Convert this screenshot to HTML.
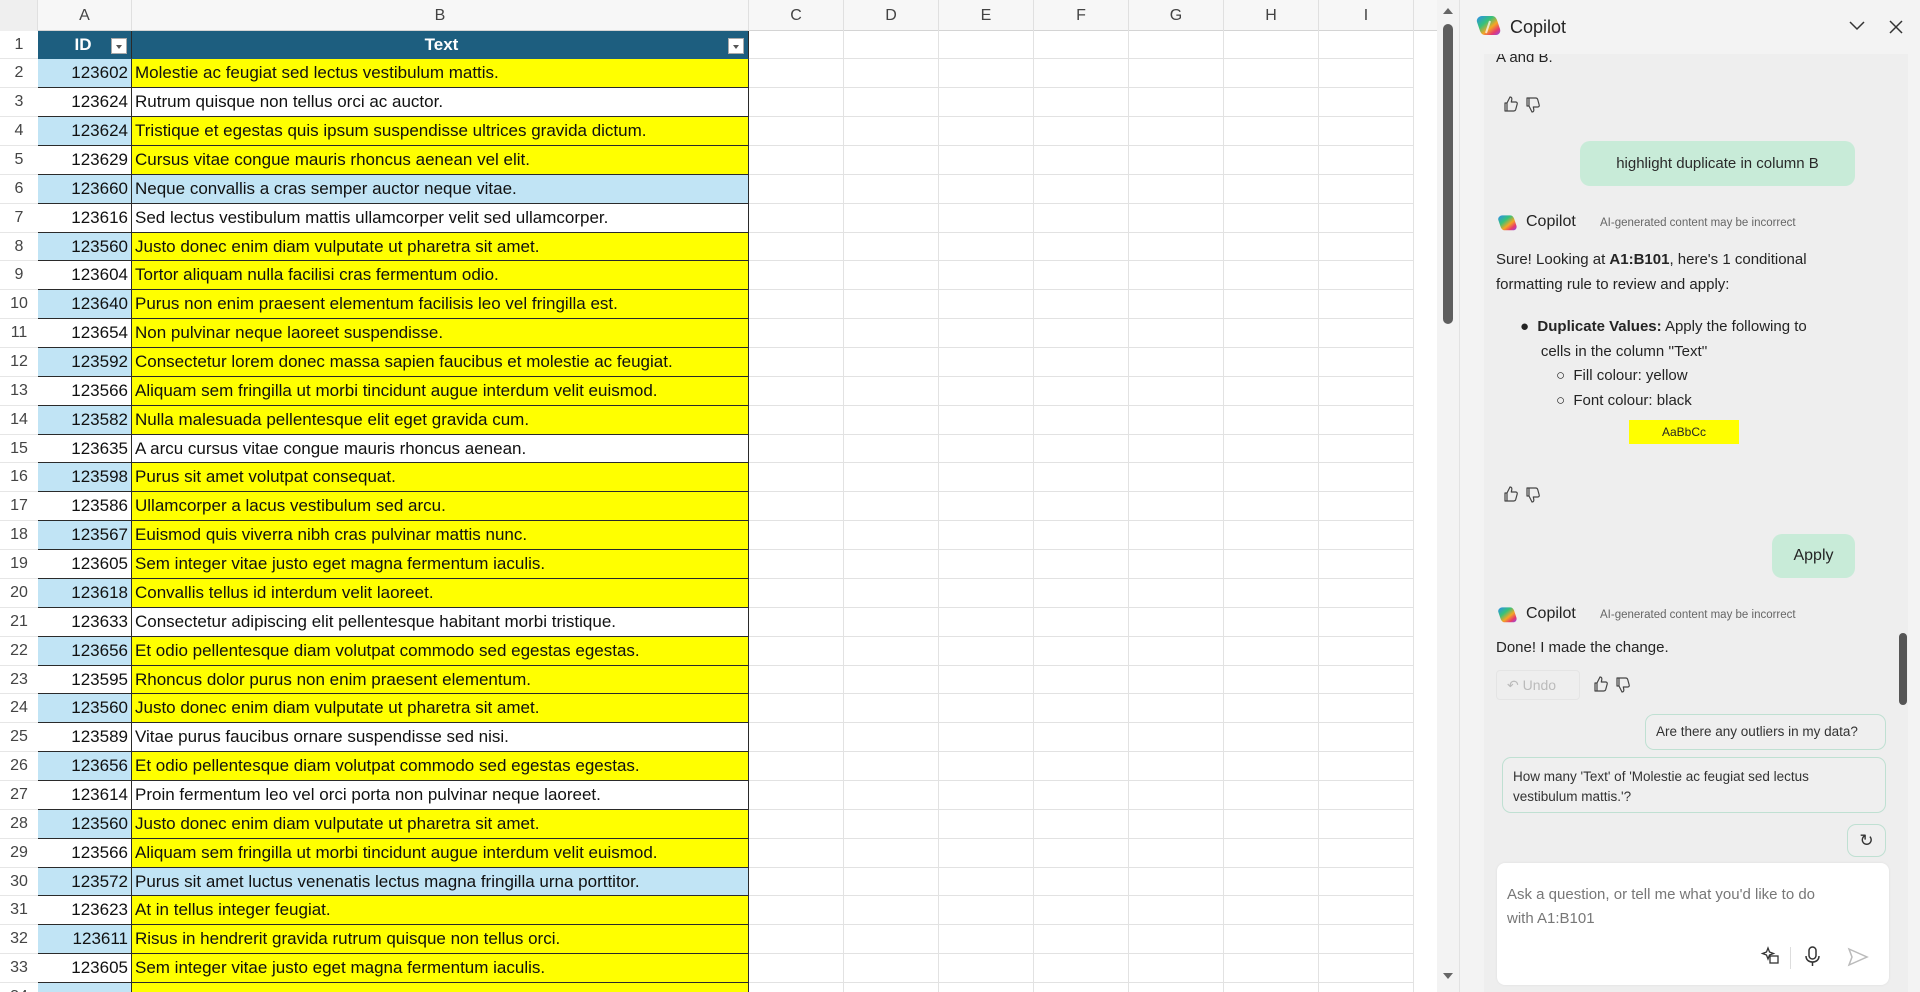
<!DOCTYPE html>
<html><head><meta charset="utf-8"><style>
*{box-sizing:border-box;margin:0;padding:0}
body{width:1920px;height:992px;overflow:hidden;background:#fff;font-family:"Liberation Sans",sans-serif;position:relative}
#sheet{position:absolute;left:0;top:0;width:1437px;height:992px;overflow:hidden;background:#fff}
.hdr{position:absolute;top:0;left:0;height:31px;width:1437px;background:#f7f7f7;border-bottom:1px solid #d4d4d4;display:flex}
.hdr div{flex-shrink:0;height:31px;line-height:31px;text-align:center;font-size:16px;color:#444;border-right:1px solid #e0e0e0}
.rows{position:absolute;top:30.6px;left:0;width:1437px}
.r{display:flex;height:28.86px;font-size:17px;line-height:28px;color:#111}
.r>div{flex-shrink:0;height:28.86px;white-space:nowrap;overflow:hidden}
.n{width:38px;text-align:center;color:#444;font-size:16px;border-bottom:1px solid #e6e6e6;background:#fff}
.a{width:94px;text-align:right;padding-right:3px;border-bottom:1px solid #2a2a2a;border-right:1px solid #2a2a2a}
.b{width:617px;padding-left:3px;border-bottom:1px solid #2a2a2a;border-right:1px solid #2a2a2a}
.g{width:95px;border-right:1px solid #e2e2e2;border-bottom:1px solid #e2e2e2}
.bl{background:#c1e4f5}.w{background:#fff}.y{background:#ffff00}
.th{background:#1d5e7f;color:#fff;font-weight:bold;text-align:center;position:relative;border-bottom:1px solid #1d5e7f!important}
.dd{position:absolute;right:4px;top:7px;width:16px;height:16px;background:#fff;border:1px solid #aaa}
.dd:after{content:"";position:absolute;left:4px;top:6px;border-left:3.5px solid transparent;border-right:3.5px solid transparent;border-top:4px solid #555}
#vs{position:absolute;left:1437px;top:0;width:23px;height:992px;background:#f3f3f3;border-right:1px solid #e2e2e2}
#pane{position:absolute;left:1460px;top:0;width:460px;height:992px;background:#f3f3f3;font-family:"Liberation Sans",sans-serif;color:#242424}
.chat{position:absolute;left:24px;top:54px;width:424px;height:938px;background:#eeeeee}
.t{position:absolute;font-size:15px;white-space:nowrap}
.bub{position:absolute;border-radius:10px;font-size:15px;display:flex;align-items:center;justify-content:center}
.sug{position:absolute;border:1px solid #bfe0d2;border-radius:9px;font-size:13.5px;color:#333;background:#efefef}
.th2{position:absolute}
</style></head><body>
<svg width="0" height="0" style="position:absolute"><defs>
<linearGradient id="g1" x1="0" y1="0" x2="1" y2="1"><stop offset="0" stop-color="#2d8cf0"/><stop offset=".35" stop-color="#35c27a"/><stop offset=".6" stop-color="#f5a623"/><stop offset=".8" stop-color="#e83a6b"/><stop offset="1" stop-color="#8a4cf0"/></linearGradient>
<g id="tu"><path d="M5 8v8M5 8h-2v8h2M5 8l3-6c1.5 0 2 1 1.8 2.5L9.3 7h4.5c1 0 1.7 1 1.4 2l-1.5 5.5c-.3 1-1 1.5-2 1.5H5" fill="none" stroke="#444" stroke-width="1.2" stroke-linejoin="round"/></g>
<g id="td"><g transform="translate(0,18) scale(1,-1)"><path d="M5 8v8M5 8h-2v8h2M5 8l3-6c1.5 0 2 1 1.8 2.5L9.3 7h4.5c1 0 1.7 1 1.4 2l-1.5 5.5c-.3 1-1 1.5-2 1.5H5" fill="none" stroke="#444" stroke-width="1.2" stroke-linejoin="round"/></g></g>
</defs></svg>
<div id="sheet">
<div class="hdr"><div style="width:38px;background:#efefef"></div><div style="width:94px">A</div><div style="width:617px">B</div><div style="width:95px">C</div><div style="width:95px">D</div><div style="width:95px">E</div><div style="width:95px">F</div><div style="width:95px">G</div><div style="width:95px">H</div><div style="width:95px">I</div><div style="width:95px"></div></div>
<div class="rows">
<div class="r"><div class="n">1</div><div class="a th">ID<span class="dd"></span></div><div class="b th">Text<span class="dd"></span></div><div class="g"></div><div class="g"></div><div class="g"></div><div class="g"></div><div class="g"></div><div class="g"></div><div class="g"></div></div>
<div class="r"><div class="n">2</div><div class="a bl">123602</div><div class="b y">Molestie ac feugiat sed lectus vestibulum mattis.</div><div class="g"></div><div class="g"></div><div class="g"></div><div class="g"></div><div class="g"></div><div class="g"></div><div class="g"></div></div>
<div class="r"><div class="n">3</div><div class="a w">123624</div><div class="b w">Rutrum quisque non tellus orci ac auctor.</div><div class="g"></div><div class="g"></div><div class="g"></div><div class="g"></div><div class="g"></div><div class="g"></div><div class="g"></div></div>
<div class="r"><div class="n">4</div><div class="a bl">123624</div><div class="b y">Tristique et egestas quis ipsum suspendisse ultrices gravida dictum.</div><div class="g"></div><div class="g"></div><div class="g"></div><div class="g"></div><div class="g"></div><div class="g"></div><div class="g"></div></div>
<div class="r"><div class="n">5</div><div class="a w">123629</div><div class="b y">Cursus vitae congue mauris rhoncus aenean vel elit.</div><div class="g"></div><div class="g"></div><div class="g"></div><div class="g"></div><div class="g"></div><div class="g"></div><div class="g"></div></div>
<div class="r"><div class="n">6</div><div class="a bl">123660</div><div class="b bl">Neque convallis a cras semper auctor neque vitae.</div><div class="g"></div><div class="g"></div><div class="g"></div><div class="g"></div><div class="g"></div><div class="g"></div><div class="g"></div></div>
<div class="r"><div class="n">7</div><div class="a w">123616</div><div class="b w">Sed lectus vestibulum mattis ullamcorper velit sed ullamcorper.</div><div class="g"></div><div class="g"></div><div class="g"></div><div class="g"></div><div class="g"></div><div class="g"></div><div class="g"></div></div>
<div class="r"><div class="n">8</div><div class="a bl">123560</div><div class="b y">Justo donec enim diam vulputate ut pharetra sit amet.</div><div class="g"></div><div class="g"></div><div class="g"></div><div class="g"></div><div class="g"></div><div class="g"></div><div class="g"></div></div>
<div class="r"><div class="n">9</div><div class="a w">123604</div><div class="b y">Tortor aliquam nulla facilisi cras fermentum odio.</div><div class="g"></div><div class="g"></div><div class="g"></div><div class="g"></div><div class="g"></div><div class="g"></div><div class="g"></div></div>
<div class="r"><div class="n">10</div><div class="a bl">123640</div><div class="b y">Purus non enim praesent elementum facilisis leo vel fringilla est.</div><div class="g"></div><div class="g"></div><div class="g"></div><div class="g"></div><div class="g"></div><div class="g"></div><div class="g"></div></div>
<div class="r"><div class="n">11</div><div class="a w">123654</div><div class="b y">Non pulvinar neque laoreet suspendisse.</div><div class="g"></div><div class="g"></div><div class="g"></div><div class="g"></div><div class="g"></div><div class="g"></div><div class="g"></div></div>
<div class="r"><div class="n">12</div><div class="a bl">123592</div><div class="b y">Consectetur lorem donec massa sapien faucibus et molestie ac feugiat.</div><div class="g"></div><div class="g"></div><div class="g"></div><div class="g"></div><div class="g"></div><div class="g"></div><div class="g"></div></div>
<div class="r"><div class="n">13</div><div class="a w">123566</div><div class="b y">Aliquam sem fringilla ut morbi tincidunt augue interdum velit euismod.</div><div class="g"></div><div class="g"></div><div class="g"></div><div class="g"></div><div class="g"></div><div class="g"></div><div class="g"></div></div>
<div class="r"><div class="n">14</div><div class="a bl">123582</div><div class="b y">Nulla malesuada pellentesque elit eget gravida cum.</div><div class="g"></div><div class="g"></div><div class="g"></div><div class="g"></div><div class="g"></div><div class="g"></div><div class="g"></div></div>
<div class="r"><div class="n">15</div><div class="a w">123635</div><div class="b w">A arcu cursus vitae congue mauris rhoncus aenean.</div><div class="g"></div><div class="g"></div><div class="g"></div><div class="g"></div><div class="g"></div><div class="g"></div><div class="g"></div></div>
<div class="r"><div class="n">16</div><div class="a bl">123598</div><div class="b y">Purus sit amet volutpat consequat.</div><div class="g"></div><div class="g"></div><div class="g"></div><div class="g"></div><div class="g"></div><div class="g"></div><div class="g"></div></div>
<div class="r"><div class="n">17</div><div class="a w">123586</div><div class="b y">Ullamcorper a lacus vestibulum sed arcu.</div><div class="g"></div><div class="g"></div><div class="g"></div><div class="g"></div><div class="g"></div><div class="g"></div><div class="g"></div></div>
<div class="r"><div class="n">18</div><div class="a bl">123567</div><div class="b y">Euismod quis viverra nibh cras pulvinar mattis nunc.</div><div class="g"></div><div class="g"></div><div class="g"></div><div class="g"></div><div class="g"></div><div class="g"></div><div class="g"></div></div>
<div class="r"><div class="n">19</div><div class="a w">123605</div><div class="b y">Sem integer vitae justo eget magna fermentum iaculis.</div><div class="g"></div><div class="g"></div><div class="g"></div><div class="g"></div><div class="g"></div><div class="g"></div><div class="g"></div></div>
<div class="r"><div class="n">20</div><div class="a bl">123618</div><div class="b y">Convallis tellus id interdum velit laoreet.</div><div class="g"></div><div class="g"></div><div class="g"></div><div class="g"></div><div class="g"></div><div class="g"></div><div class="g"></div></div>
<div class="r"><div class="n">21</div><div class="a w">123633</div><div class="b w">Consectetur adipiscing elit pellentesque habitant morbi tristique.</div><div class="g"></div><div class="g"></div><div class="g"></div><div class="g"></div><div class="g"></div><div class="g"></div><div class="g"></div></div>
<div class="r"><div class="n">22</div><div class="a bl">123656</div><div class="b y">Et odio pellentesque diam volutpat commodo sed egestas egestas.</div><div class="g"></div><div class="g"></div><div class="g"></div><div class="g"></div><div class="g"></div><div class="g"></div><div class="g"></div></div>
<div class="r"><div class="n">23</div><div class="a w">123595</div><div class="b y">Rhoncus dolor purus non enim praesent elementum.</div><div class="g"></div><div class="g"></div><div class="g"></div><div class="g"></div><div class="g"></div><div class="g"></div><div class="g"></div></div>
<div class="r"><div class="n">24</div><div class="a bl">123560</div><div class="b y">Justo donec enim diam vulputate ut pharetra sit amet.</div><div class="g"></div><div class="g"></div><div class="g"></div><div class="g"></div><div class="g"></div><div class="g"></div><div class="g"></div></div>
<div class="r"><div class="n">25</div><div class="a w">123589</div><div class="b w">Vitae purus faucibus ornare suspendisse sed nisi.</div><div class="g"></div><div class="g"></div><div class="g"></div><div class="g"></div><div class="g"></div><div class="g"></div><div class="g"></div></div>
<div class="r"><div class="n">26</div><div class="a bl">123656</div><div class="b y">Et odio pellentesque diam volutpat commodo sed egestas egestas.</div><div class="g"></div><div class="g"></div><div class="g"></div><div class="g"></div><div class="g"></div><div class="g"></div><div class="g"></div></div>
<div class="r"><div class="n">27</div><div class="a w">123614</div><div class="b w">Proin fermentum leo vel orci porta non pulvinar neque laoreet.</div><div class="g"></div><div class="g"></div><div class="g"></div><div class="g"></div><div class="g"></div><div class="g"></div><div class="g"></div></div>
<div class="r"><div class="n">28</div><div class="a bl">123560</div><div class="b y">Justo donec enim diam vulputate ut pharetra sit amet.</div><div class="g"></div><div class="g"></div><div class="g"></div><div class="g"></div><div class="g"></div><div class="g"></div><div class="g"></div></div>
<div class="r"><div class="n">29</div><div class="a w">123566</div><div class="b y">Aliquam sem fringilla ut morbi tincidunt augue interdum velit euismod.</div><div class="g"></div><div class="g"></div><div class="g"></div><div class="g"></div><div class="g"></div><div class="g"></div><div class="g"></div></div>
<div class="r"><div class="n">30</div><div class="a bl">123572</div><div class="b bl">Purus sit amet luctus venenatis lectus magna fringilla urna porttitor.</div><div class="g"></div><div class="g"></div><div class="g"></div><div class="g"></div><div class="g"></div><div class="g"></div><div class="g"></div></div>
<div class="r"><div class="n">31</div><div class="a w">123623</div><div class="b y">At in tellus integer feugiat.</div><div class="g"></div><div class="g"></div><div class="g"></div><div class="g"></div><div class="g"></div><div class="g"></div><div class="g"></div></div>
<div class="r"><div class="n">32</div><div class="a bl">123611</div><div class="b y">Risus in hendrerit gravida rutrum quisque non tellus orci.</div><div class="g"></div><div class="g"></div><div class="g"></div><div class="g"></div><div class="g"></div><div class="g"></div><div class="g"></div></div>
<div class="r"><div class="n">33</div><div class="a w">123605</div><div class="b y">Sem integer vitae justo eget magna fermentum iaculis.</div><div class="g"></div><div class="g"></div><div class="g"></div><div class="g"></div><div class="g"></div><div class="g"></div><div class="g"></div></div>
<div class="r"><div class="n">34</div><div class="a bl"></div><div class="b y"></div><div class="g"></div><div class="g"></div><div class="g"></div><div class="g"></div><div class="g"></div><div class="g"></div><div class="g"></div></div>
</div>
</div>
<div id="vs">
<div style="position:absolute;left:6px;top:8px;border-left:5px solid transparent;border-right:5px solid transparent;border-bottom:6px solid #666"></div>
<div style="position:absolute;left:6px;top:24px;width:10px;height:300px;background:#5e5e5e;border-radius:5px"></div>
<div style="position:absolute;left:6px;top:973px;border-left:5px solid transparent;border-right:5px solid transparent;border-top:6px solid #666"></div>
</div>
<div id="pane">
<svg style="position:absolute;left:14px;top:13px" width="28" height="28" viewBox="0 0 28 28"><path d="M8 3h10c3 0 4 2 5 4l3 9c1 3-1 6-4 6H11c-3 0-4-2-5-4L3 9C2 6 5 3 8 3z" fill="url(#g1)"/><path d="M12 20l4-12" stroke="#fff" stroke-width="2" opacity=".7"/></svg>
<div class="t" style="left:50px;top:17px;font-size:18px">Copilot</div>
<svg style="position:absolute;left:388px;top:20px" width="18" height="12"><path d="M2 2l7 7 7-7" fill="none" stroke="#333" stroke-width="1.5"/></svg>
<svg style="position:absolute;left:429px;top:20px" width="14" height="14"><path d="M1 1l12 12M13 1L1 13" stroke="#333" stroke-width="1.5"/></svg>
<div class="chat">
<div class="t" style="left:12px;top:0px;height:14px;overflow:hidden;line-height:8px">A and B.</div>
<svg class="th2" style="left:18px;top:41px" width="18" height="18"><use href="#tu"/></svg>
<svg class="th2" style="left:40px;top:42px" width="18" height="18"><use href="#td"/></svg>
<div class="bub" style="left:96px;top:87px;width:275px;height:45px;background:#c8ebd8;color:#2a2a2a">highlight duplicate in column B</div>
<svg style="position:absolute;left:12px;top:159px" width="22" height="22" viewBox="0 0 28 28"><path d="M8 3h10c3 0 4 2 5 4l3 9c1 3-1 6-4 6H11c-3 0-4-2-5-4L3 9C2 6 5 3 8 3z" fill="url(#g1)"/></svg>
<div class="t" style="left:42px;top:159px;font-size:16px">Copilot</div>
<div class="t" style="left:116px;top:163px;font-size:11.5px;color:#666">AI-generated content may be incorrect</div>
<div class="t" style="left:12px;top:193px;line-height:25px">Sure! Looking at <b>A1:B101</b>, here's 1 conditional<br>formatting rule to review and apply:</div>
<div class="t" style="left:36px;top:260px;line-height:25px">&#9679;&nbsp;&nbsp;<b>Duplicate Values:</b> Apply the following to<br>&nbsp;&nbsp;&nbsp;&nbsp;&nbsp;cells in the column ''Text''</div>
<div class="t" style="left:72px;top:309px;line-height:25px">&#9675;&nbsp;&nbsp;Fill colour: yellow<br>&#9675;&nbsp;&nbsp;Font colour: black</div>
<div style="position:absolute;left:145px;top:366px;width:110px;height:24px;background:#ffff00;font-size:12px;text-align:center;line-height:24px">AaBbCc</div>
<svg class="th2" style="left:18px;top:431px" width="18" height="18"><use href="#tu"/></svg>
<svg class="th2" style="left:40px;top:432px" width="18" height="18"><use href="#td"/></svg>
<div class="bub" style="left:288px;top:480px;width:83px;height:44px;background:#c8ebd8;font-size:16px">Apply</div>
<svg style="position:absolute;left:12px;top:551px" width="22" height="22" viewBox="0 0 28 28"><path d="M8 3h10c3 0 4 2 5 4l3 9c1 3-1 6-4 6H11c-3 0-4-2-5-4L3 9C2 6 5 3 8 3z" fill="url(#g1)"/></svg>
<div class="t" style="left:42px;top:551px;font-size:16px">Copilot</div>
<div class="t" style="left:116px;top:555px;font-size:11.5px;color:#666">AI-generated content may be incorrect</div>
<div class="t" style="left:12px;top:585px">Done! I made the change.</div>
<div style="position:absolute;left:12px;top:616px;width:84px;height:30px;border:1px solid #e4e4e4;border-radius:4px;color:#bbb;font-size:14px;line-height:28px;padding-left:10px">&#x21B6; Undo</div>
<svg class="th2" style="left:108px;top:621px" width="18" height="18"><use href="#tu"/></svg>
<svg class="th2" style="left:130px;top:622px" width="18" height="18"><use href="#td"/></svg>
<div class="sug" style="left:161px;top:660px;width:241px;height:36px;line-height:34px;padding-left:10px">Are there any outliers in my data?</div>
<div class="sug" style="left:18px;top:703px;width:384px;height:56px;padding:9px 0 0 10px;line-height:20px">How many 'Text' of 'Molestie ac feugiat sed lectus<br>vestibulum mattis.'?</div>
<div class="sug" style="left:363px;top:770px;width:39px;height:33px;text-align:center;line-height:31px;font-size:17px">&#x21BB;</div>
<div style="position:absolute;left:13px;top:809px;width:392px;height:122px;background:#fff;border-radius:8px;box-shadow:0 0 2px #ddd">
<div class="t" style="left:10px;top:20px;line-height:24px;color:#777">Ask a question, or tell me what you'd like to do<br>with A1:B101</div>
<svg style="position:absolute;left:262px;top:82px" width="22" height="22"><path d="M9 3l1.5 4 4 1.5-4 1.5L9 14l-1.5-4L3.5 8.5l4-1.5z" fill="none" stroke="#333" stroke-width="1.3"/><rect x="11" y="11" width="8" height="7" fill="#fff" stroke="#333" stroke-width="1.3"/></svg>
<div style="position:absolute;left:293px;top:84px;width:1px;height:22px;background:#ddd"></div>
<svg style="position:absolute;left:306px;top:82px" width="20" height="24"><rect x="6" y="2" width="7" height="12" rx="3.5" fill="none" stroke="#333" stroke-width="1.5"/><path d="M3 11c0 4 3 6 6.5 6s6.5-2 6.5-6M9.5 17v4" fill="none" stroke="#333" stroke-width="1.5"/></svg>
<svg style="position:absolute;left:350px;top:84px" width="22" height="20"><path d="M2 2l18 8-18 8 3-8z" fill="none" stroke="#bbb" stroke-width="1.5"/></svg>
</div>
</div>
<div style="position:absolute;left:439px;top:633px;width:8px;height:72px;background:#555;border-radius:4px"></div>
</div>
</body></html>
